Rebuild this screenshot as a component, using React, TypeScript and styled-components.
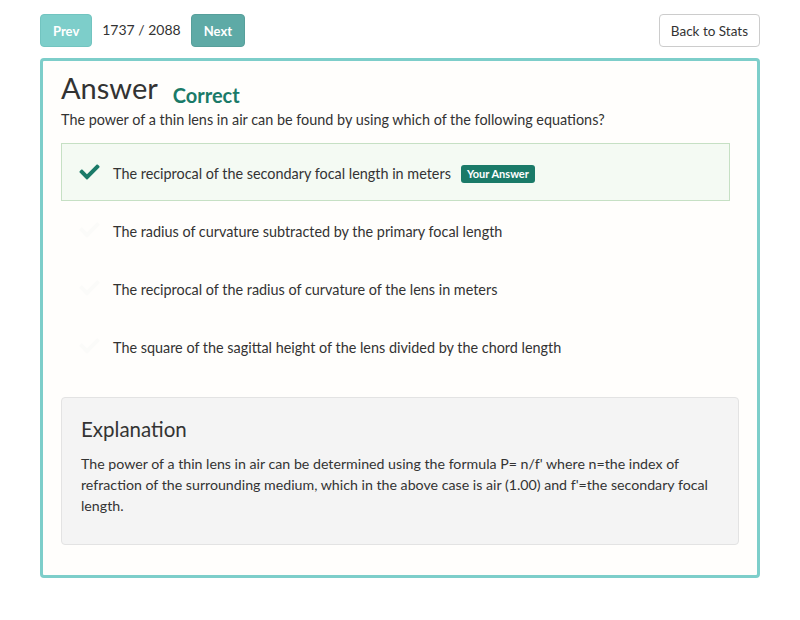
import * as React from "react";
import styled, { createGlobalStyle } from "styled-components";

const teal = "#7dceca";
const green = "#1a7a68";
const text = "#333333";

const GlobalStyle = createGlobalStyle`
  body {
    margin: 0;
    background: #ffffff;
    font-family: Lato, "Liberation Sans", sans-serif;
    color: ${text};
  }
`;

interface Option {
  label: string;
  selected?: boolean;
}

const options: Option[] = [
  { label: "The reciprocal of the secondary focal length in meters", selected: true },
  { label: "The radius of curvature subtracted by the primary focal length" },
  { label: "The reciprocal of the radius of curvature of the lens in meters" },
  { label: "The square of the sagittal height of the lens divided by the chord length" },
];

function CheckIcon({ color }: { color: string }) {
  return (
    <svg width="21" height="17" viewBox="0 30 512 430" fill={color}>
      <path d="M173.898 439.404l-166.4-166.4c-9.997-9.997-9.997-26.206 0-36.204l36.203-36.204c9.997-9.998 26.207-9.998 36.204 0L192 312.69 432.095 72.596c9.997-9.997 26.207-9.997 36.204 0l36.203 36.204c9.997 9.997 9.997 26.206 0 36.204l-294.4 294.401c-9.998 9.997-26.207 9.997-36.204-.001z" />
    </svg>
  );
}

export default function App() {
  return (
    <>
      <GlobalStyle />
      <Page>
        <TopBar>
          <Pager>
            <NavButton $variant="light">Prev</NavButton>
            <Counter>1737 / 2088</Counter>
            <NavButton $variant="dark">Next</NavButton>
          </Pager>
          <BackButton>Back to Stats</BackButton>
        </TopBar>

        <Card>
          <TitleRow>
            <Title>Answer</Title>
            <Verdict>Correct</Verdict>
          </TitleRow>
          <Question>
            The power of a thin lens in air can be found by using which of the
            following equations?
          </Question>

          <OptionList>
            {options.map((o) => (
              <OptionRow key={o.label} $selected={!!o.selected}>
                <IconCell>
                  <CheckIcon color={o.selected ? green : "#fbfbf9"} />
                </IconCell>
                <OptionText>{o.label}</OptionText>
                {o.selected && <Badge>Your Answer</Badge>}
              </OptionRow>
            ))}
          </OptionList>

          <Explanation>
            <ExplanationTitle>Explanation</ExplanationTitle>
            <ExplanationBody>
              The power of a thin lens in air can be determined using the formula
              P= n/f' where n=the index of refraction of the surrounding medium,
              which in the above case is air (1.00) and f'=the secondary focal
              length.
            </ExplanationBody>
          </Explanation>
        </Card>
      </Page>
    </>
  );
}

const Page = styled.div`
  width: 720px;
  padding: 14px 40px 40px;
`;

const TopBar = styled.div`
  display: flex;
  align-items: center;
  justify-content: space-between;
  height: 33px;
`;

const Pager = styled.div`
  display: flex;
  align-items: center;
  gap: 9px;
`;

const NavButton = styled.button<{ $variant: "light" | "dark" }>`
  height: 33px;
  padding: 0 12px;
  border-radius: 4px;
  border: 1px solid ${(p) => (p.$variant === "light" ? "#72c4c0" : "#579f9b")};
  background: ${(p) => (p.$variant === "light" ? teal : "#5eaaa6")};
  color: #ffffff;
  font-family: inherit;
  font-size: 13px;
  font-weight: 700;
`;

const Counter = styled.span`
  font-size: 14px;
  color: ${text};
  margin: -3px 1px 0;
`;

const BackButton = styled.button`
  height: 33px;
  padding: 0 11px;
  border-radius: 4px;
  border: 1px solid #cccccc;
  background: #ffffff;
  color: ${text};
  font-family: inherit;
  font-size: 13.5px;
`;

const Card = styled.div`
  margin-top: 11px;
  border: 3px solid ${teal};
  border-radius: 4px;
  background: #fffefc;
  padding: 11px 18px 30px;
`;

const TitleRow = styled.div`
  display: flex;
  align-items: flex-end;
  gap: 15px;
`;

const Title = styled.h1`
  margin: 0;
  font-size: 29px;
  font-weight: 400;
  line-height: 32px;
  color: ${text};
`;

const Verdict = styled.h3`
  margin: 0 0 -4px;
  font-size: 20px;
  font-weight: 700;
  line-height: 26px;
  color: ${green};
`;

const Question = styled.p`
  margin: 6px 0 13px;
  font-size: 14.4px;
  line-height: 20px;
`;

const OptionList = styled.div`
  display: flex;
  flex-direction: column;
  margin-right: 9px;
`;

const OptionRow = styled.div<{ $selected: boolean }>`
  display: flex;
  align-items: center;
  height: 58px;
  box-sizing: border-box;
  padding-top: 3px;
  border: 1px solid ${(p) => (p.$selected ? "#c6e0c4" : "transparent")};
  background: ${(p) => (p.$selected ? "#f4faf3" : "transparent")};
`;

const IconCell = styled.div`
  display: flex;
  width: 51px;
  padding-left: 17px;
  box-sizing: border-box;
  margin-top: -5px;
`;

const OptionText = styled.span`
  font-size: 14.4px;
`;

const Badge = styled.span`
  margin-left: 10px;
  padding: 0 6px;
  height: 18px;
  line-height: 18px;
  border-radius: 3px;
  background: ${green};
  color: #ffffff;
  font-size: 11px;
  font-weight: 700;
`;

const Explanation = styled.div`
  margin-top: 22px;
  background: #f4f4f4;
  border: 1px solid #e3e3e3;
  border-radius: 4px;
  padding: 17px 16px 28px 19px;
`;

const ExplanationTitle = styled.h3`
  margin: 0 0 10px;
  font-size: 20.5px;
  font-weight: 400;
  line-height: 28px;
  color: ${text};
`;

const ExplanationBody = styled.p`
  margin: 0;
  font-size: 14.2px;
  line-height: 21px;
`;
